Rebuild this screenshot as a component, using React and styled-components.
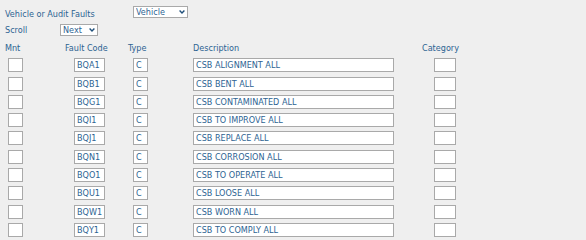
import React from 'react'
import styled, { createGlobalStyle } from 'styled-components'

const color = {
  page: '#efefef',
  text: '#2d6392',
  border: '#a9a9a9',
  white: '#ffffff',
}

const GlobalStyle = createGlobalStyle`
  html, body {
    margin: 0;
    background: ${color.page};
  }
  body {
    font-family: "DejaVu Sans Condensed", "DejaVu Sans", Verdana, sans-serif;
    font-stretch: condensed;
    font-size: 9px;
    color: ${color.text};
  }
`

const Page = styled.div`
  width: 586px;
  height: 240px;
  padding: 4px 0 0 5px;
  box-sizing: border-box;
  overflow: hidden;
`

const FilterRow = styled.div`
  display: grid;
  grid-template-columns: ${p => p.labelWidth}px auto;
  align-items: center;
  height: 12px;
  margin-bottom: ${p => p.gap || 0}px;
`

const Label = styled.span`
  line-height: 12px;
  padding-top: ${p => p.drop || 0}px;
`

const SelectWrap = styled.div`
  position: relative;
  width: ${p => p.width}px;
  height: 12px;
`

const Select = styled.select`
  appearance: none;
  width: 100%;
  height: 100%;
  box-sizing: border-box;
  margin: 0;
  padding: 0 0 0 2px;
  border: 1px solid ${color.border};
  border-radius: 0;
  background: ${color.white};
  font: inherit;
  font-size: 9px;
  line-height: 10px;
  color: ${color.text};
`

const Chevron = styled.svg`
  position: absolute;
  right: 3px;
  top: 4px;
  width: 6px;
  height: 4px;
  pointer-events: none;
`

const Grid = styled.div`
  display: grid;
  grid-template-columns: 60px 63px 65px 229px 60px;
  row-gap: 4.3px;
  margin-top: 6px;
`

const Heading = styled.div`
  line-height: 12px;
  height: 12px;
`

const Cell = styled.div`
  padding-left: ${p => p.offset || 0}px;
`

const Field = styled.input`
  display: block;
  width: ${p => p.width}px;
  height: 14px;
  box-sizing: border-box;
  margin: 0;
  padding: 0 0 0 2px;
  border: 1px solid ${color.border};
  border-radius: 0;
  background: ${color.white};
  font: inherit;
  font-size: 9px;
  color: ${color.text};
  outline: none;
`

const faults = [
  ['BQA1', 'CSB ALIGNMENT ALL'],
  ['BQB1', 'CSB BENT ALL'],
  ['BQG1', 'CSB CONTAMINATED ALL'],
  ['BQI1', 'CSB TO IMPROVE ALL'],
  ['BQJ1', 'CSB REPLACE ALL'],
  ['BQN1', 'CSB CORROSION ALL'],
  ['BQO1', 'CSB TO OPERATE ALL'],
  ['BQU1', 'CSB LOOSE ALL'],
  ['BQW1', 'CSB WORN ALL'],
  ['BQY1', 'CSB TO COMPLY ALL'],
]

const ChevronIcon = () => (
  <Chevron viewBox="0 0 6 4">
    <path d="M0.6 0.6 L3 3 L5.4 0.6" fill="none" stroke="#1f4f7a" strokeWidth="1.4" />
  </Chevron>
)

const App = () => (
  <Page>
    <GlobalStyle />
    <FilterRow labelWidth={128} gap={8}>
      <Label drop={4}>Vehicle or Audit Faults</Label>
      <SelectWrap width={55}>
        <Select defaultValue="Vehicle">
          <option>Vehicle</option>
          <option>Audit</option>
        </Select>
        <ChevronIcon />
      </SelectWrap>
    </FilterRow>
    <FilterRow labelWidth={55}>
      <Label>Scroll</Label>
      <SelectWrap width={38}>
        <Select defaultValue="Next">
          <option>Next</option>
          <option>Previous</option>
        </Select>
        <ChevronIcon />
      </SelectWrap>
    </FilterRow>

    <Grid>
      <Heading>Mnt</Heading>
      <Heading>Fault Code</Heading>
      <Heading>Type</Heading>
      <Heading>Description</Heading>
      <Heading>Category</Heading>
      {faults.map(([code, desc]) => (
        <React.Fragment key={code}>
          <Cell offset={3}><Field width={15} /></Cell>
          <Cell offset={9}><Field width={31} defaultValue={code} /></Cell>
          <Cell offset={5}><Field width={15} defaultValue="C" /></Cell>
          <Cell><Field width={201} defaultValue={desc} /></Cell>
          <Cell offset={12}><Field width={22} /></Cell>
        </React.Fragment>
      ))}
    </Grid>
  </Page>
)

export default App
